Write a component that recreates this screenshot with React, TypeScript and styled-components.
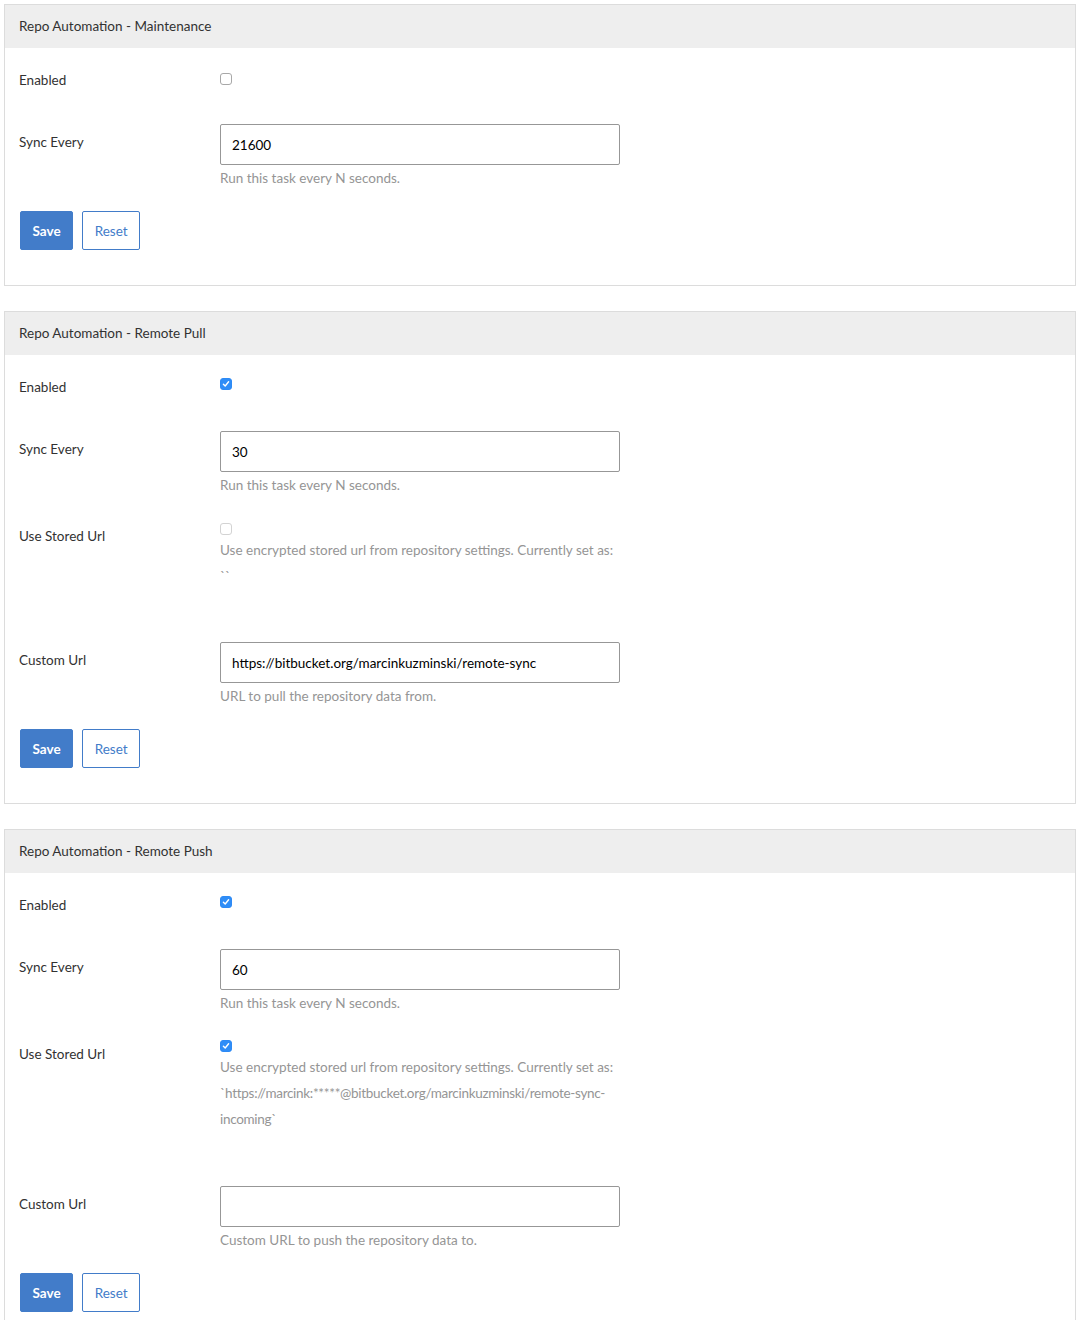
import React from 'react';
import styled, { createGlobalStyle } from 'styled-components';

const Global = createGlobalStyle`
  html, body { margin: 0; padding: 0; background: #fff; }
  body {
    font-family: Lato, "Open Sans", "Liberation Sans", sans-serif;
    font-size: 13.5px;
    color: #323232;
  }
`;

const Page = styled.div`
  padding: 4px;
  display: flex;
  flex-direction: column;
  gap: 25px;
`;

const Panel = styled.section`
  border: 1px solid #dcdcdc;
  background: #fff;
`;

const PanelHeader = styled.div`
  height: 43px;
  background: #eeeeee;
  display: flex;
  align-items: center;
  padding: 0 14px;
  padding-bottom: 1px;
  box-sizing: border-box;
  font-size: 13.5px;
  color: #323232;
`;

const PanelBody = styled.div`
  padding: 14px 14px 35px;
`;

const Row = styled.div<{ $minHeight?: number }>`
  display: flex;
  margin-bottom: 24px;
  min-height: ${p => (p.$minHeight ? `${p.$minHeight}px` : 'auto')};
`;

const Label = styled.div`
  width: 201px;
  flex: none;
  padding-top: 9px;
  line-height: 18px;
  color: #323232;
`;

const Field = styled.div`
  width: 400px;
  display: flex;
  flex-direction: column;
  align-items: flex-start;
`;

const Input = styled.input`
  box-sizing: border-box;
  width: 400px;
  height: 41px;
  padding: 0 11px;
  border: 1px solid #979797;
  border-radius: 2px;
  font-family: inherit;
  font-size: 13.5px;
  color: #000;
  outline: none;
  background: #fff;
`;

const Help = styled.div<{ $tall?: boolean; $after?: number }>`
  margin-top: ${p => (p.$tall ? 2 : 4)}px;
  margin-bottom: ${p => p.$after ?? 0}px;
  line-height: ${p => (p.$tall ? 26 : 18)}px;
  color: #959595;
  overflow-wrap: anywhere;
`;

const Code = styled.span`
  letter-spacing: -0.3px;
`;

const Box = styled.span<{ $checked?: boolean; $muted?: boolean; $top: number }>`
  box-sizing: border-box;
  display: inline-flex;
  align-items: center;
  justify-content: center;
  width: 12px;
  height: 12px;
  margin-top: ${p => p.$top}px;
  border-radius: 3px;
  border: 1px solid ${p => (p.$checked ? '#2d8af5' : p.$muted ? '#d3d3d3' : '#a8a8a8')};
  background: ${p => (p.$checked ? '#2f8df7' : '#fff')};
`;

const Buttons = styled.div`
  display: flex;
  gap: 9px;
  padding-left: 1px;
`;

const Button = styled.button<{ $primary?: boolean }>`
  box-sizing: border-box;
  height: 39px;
  padding: 0 11.5px;
  border-radius: 2px;
  border: 1px solid #427cc9;
  font-family: inherit;
  font-size: 13.5px;
  font-weight: ${p => (p.$primary ? 700 : 400)};
  background: ${p => (p.$primary ? '#427cc9' : '#fff')};
  color: ${p => (p.$primary ? '#fff' : '#427cc9')};
`;

function Check({ checked, muted, top }: { checked?: boolean; muted?: boolean; top: number }) {
  return (
    <Box $checked={checked} $muted={muted} $top={top}>
      {checked && (
        <svg width="8" height="8" viewBox="0 0 8 8">
          <path d="M1.4 4.2 L3.2 6 L6.6 1.8" fill="none" stroke="#fff" strokeWidth="1.4" strokeLinecap="round" strokeLinejoin="round" />
        </svg>
      )}
    </Box>
  );
}

function SyncRow({ value }: { value: string }) {
  return (
    <Row>
      <Label>Sync Every</Label>
      <Field>
        <Input defaultValue={value} />
        <Help>Run this task every N seconds.</Help>
      </Field>
    </Row>
  );
}

function EnabledRow({ checked, top }: { checked?: boolean; top: number }) {
  return (
    <Row $minHeight={38}>
      <Label>Enabled</Label>
      <Field>
        <Check checked={checked} top={top} />
      </Field>
    </Row>
  );
}

function Actions() {
  return (
    <Buttons>
      <Button $primary>Save</Button>
      <Button>Reset</Button>
    </Buttons>
  );
}

export default function App() {
  return (
    <>
      <Global />
      <Page>
        <Panel>
          <PanelHeader>Repo Automation - Maintenance</PanelHeader>
          <PanelBody>
            <EnabledRow top={11} />
            <SyncRow value="21600" />
            <Actions />
          </PanelBody>
        </Panel>

        <Panel>
          <PanelHeader>Repo Automation - Remote Pull</PanelHeader>
          <PanelBody>
            <EnabledRow checked top={9} />
            <SyncRow value="30" />
            <Row>
              <Label>Use Stored Url</Label>
              <Field>
                <Check muted top={5} />
                <Help $tall $after={29}>
                  Use encrypted stored url from repository settings. Currently set as: <Code>``</Code>
                </Help>
              </Field>
            </Row>
            <Row>
              <Label>Custom Url</Label>
              <Field>
                <Input defaultValue="https://bitbucket.org/marcinkuzminski/remote-sync" />
                <Help>URL to pull the repository data from.</Help>
              </Field>
            </Row>
            <Actions />
          </PanelBody>
        </Panel>

        <Panel>
          <PanelHeader>Repo Automation - Remote Push</PanelHeader>
          <PanelBody>
            <EnabledRow checked top={9} />
            <SyncRow value="60" />
            <Row>
              <Label>Use Stored Url</Label>
              <Field>
                <Check checked top={4} />
                <Help $tall $after={30}>
                  Use encrypted stored url from repository settings. Currently set as:{' '}
                  <Code>`https://marcink:*****@bitbucket.org/marcinkuzminski/remote-sync-incoming`</Code>
                </Help>
              </Field>
            </Row>
            <Row>
              <Label>Custom Url</Label>
              <Field>
                <Input defaultValue="" />
                <Help>Custom URL to push the repository data to.</Help>
              </Field>
            </Row>
            <Actions />
          </PanelBody>
        </Panel>
      </Page>
    </>
  );
}
